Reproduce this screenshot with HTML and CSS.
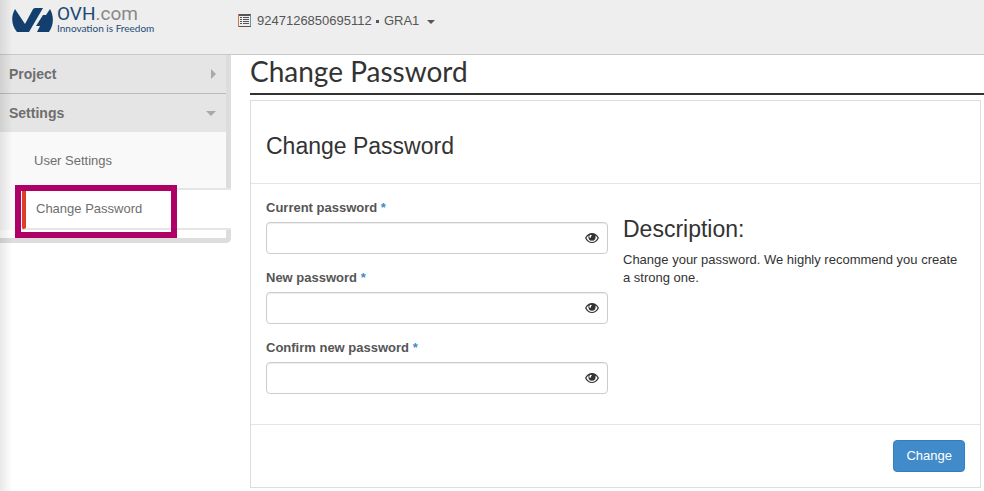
FILE: index.html
```html
<!DOCTYPE html>
<html lang="en">
<head>
<meta charset="utf-8">
<title>Change Password</title>
<link rel="stylesheet" href="styles.css">
</head>
<body>
<svg class="defs" width="0" height="0" aria-hidden="true">
  <symbol id="eye" viewBox="0 0 14 12">
    <path fill-rule="evenodd" d="M0 6C1.700 2.500 4.200 1 7 1s5.300 1.500 7 5c-1.700 3.200-4.200 5-7 5S1.700 9.200 0 6zm1.400 0C3 8.700 4.700 10 7 10s4-1.300 5.600-4c-.6-1.200-1.300-2-2.400-2.600.3.500.4 1.100.4 1.700a3.600 3.600 0 0 1-7.200 0c0-.6.100-1.200.4-1.700C2.700 4 2 4.800 1.400 6zm4-3.300c-.9.600-1.300 1.700-1 2.900l1.500.2c-.1-1.200.3-1.900 1.300-2.300z"/>
  </symbol>
</svg>
<header class="topbar">
  <a class="brand" href="#">
    <svg class="brand-mark" width="41" height="26" viewBox="0 0 41 26" aria-hidden="true">
      <path fill="#123f6d" d="M3 3l10 15 7-13q1-3 3-3h8L17 26H5C-1 19-1 10 3 3zM38 3c4 7 4 16-1 23H25l3-6h-4l7-11h3z"/>
    </svg>
    <span class="brand-text">
      <span class="brand-name">OVH<span class="brand-tld">.com</span></span>
      <span class="brand-tag">Innovation is Freedom</span>
    </span>
  </a>
  <button class="project-menu" type="button">
    <svg width="13" height="13" viewBox="0 0 13 13" aria-hidden="true">
      <path fill="#555" fill-rule="evenodd" d="M0 0h13v13H0zM1 2v10h11V2z"/>
      <path fill="#c8784a" d="M0 0h1v13H0z"/>
      <path fill="#6b93ad" d="M12 1h1v11h-1z"/>
      <path fill="#555" d="M2 3h2v1H2zM5 3h6v1H5zM2 5h2v1H2zM5 5h6v1H5zM2 7h2v1H2zM5 7h6v1H5zM2 9h2v1H2zM5 9h6v1H5z"/>
    </svg>
    <span>9247126850695112 <span class="dot"></span> GRA1</span>
    <span class="caret"></span>
  </button>
</header>
<div class="layout">
  <nav class="sidebar">
    <a class="group" href="#">Project<span class="arrow-right"></span></a>
    <a class="group" href="#">Settings<span class="arrow-down"></span></a>
    <div class="submenu">
      <a class="item" href="#">User Settings</a>
      <a class="item active" href="#">Change Password</a>
    </div>
  </nav>
  <main class="content">
    <h1>Change Password</h1>
    <form class="panel">
      <div class="panel-head"><h2>Change Password</h2></div>
      <div class="panel-body">
        <div class="fields">
          <div class="field">
            <label for="current">Current password <span class="required">*</span></label>
            <div class="control"><input id="current" type="password"><button class="reveal" type="button" aria-label="Show current password"><svg width="14" height="12"><use href="#eye"/></svg></button></div>
          </div>
          <div class="field">
            <label for="new">New password <span class="required">*</span></label>
            <div class="control"><input id="new" type="password"><button class="reveal" type="button" aria-label="Show new password"><svg width="14" height="12"><use href="#eye"/></svg></button></div>
          </div>
          <div class="field">
            <label for="confirm">Confirm new password <span class="required">*</span></label>
            <div class="control"><input id="confirm" type="password"><button class="reveal" type="button" aria-label="Show confirmed password"><svg width="14" height="12"><use href="#eye"/></svg></button></div>
          </div>
        </div>
        <div class="description">
          <h2>Description:</h2>
          <p>Change your password. We highly recommend you create a strong one.</p>
        </div>
      </div>
      <div class="panel-foot"><button class="submit" type="submit">Change</button></div>
    </form>
  </main>
</div>
</body>
</html>
```
FILE: styles.css
```css
* { box-sizing: border-box; }

body {
  margin: 0;
  min-height: 100vh;
  background: #fff;
  color: #333;
  font: 13px/18px "Liberation Sans", Arial, sans-serif;
}

/* Soft shade along the left edge of the window */
body::before {
  content: "";
  position: fixed;
  inset: 0 auto 0 0;
  z-index: 1;
  width: 12px;
  background: linear-gradient(to right, rgba(0, 0, 0, .09), transparent);
  pointer-events: none;
}

a { color: inherit; text-decoration: none; }
h1, h2, p { margin: 0; }
h2 { font-size: 23px; font-weight: 400; line-height: 26px; }
.defs { position: absolute; }

.topbar {
  display: flex;
  align-items: flex-start;
  height: 55px;
  border-bottom: 1px solid #c8c8c8;
  background: #eee;
}

.brand {
  display: flex;
  gap: 4px;
  width: 238px;
  padding: 4px 0 0 12px;
  font-family: Lato, sans-serif;
  color: #1c4a77;
}
.brand-mark { margin-top: 2px; }
.brand-text { display: flex; flex-direction: column; }
.brand-name { font: 400 19px/19px Roboto, sans-serif; }
.brand-tld { color: #888; }
.brand-tag { font-size: 10px; line-height: 10px; }

.project-menu {
  display: flex;
  align-items: center;
  gap: 6px;
  margin-top: 11px;
  padding: 0;
  border: 0;
  background: none;
  color: #555;
  font: inherit;
  line-height: 19px;
}
.dot {
  display: inline-block;
  width: 3px;
  height: 3px;
  margin: 0 1px 2px;
  background: #555;
}
.caret {
  margin: 3px 0 0 2px;
  border: 4px solid transparent;
  border-top-color: #555;
  border-bottom: 0;
}

.layout { display: flex; align-items: flex-start; }

.sidebar {
  flex: 0 0 231px;
  padding-bottom: 8px;
  border: solid #ddd;
  border-width: 0 5px 5px 0;
  border-bottom-right-radius: 5px;
}
.group {
  display: flex;
  align-items: center;
  justify-content: space-between;
  height: 38px;
  padding: 0 10px 0 9px;
  background: #e5e5e5;
  color: #6e6e6e;
  font-size: 14px;
  font-weight: 700;
}
.group + .group { height: 39px; border-top: 1px solid #b9bcbb; }
.arrow-right {
  border: 5px solid transparent;
  border-left-color: #a7a9ab;
  border-right: 0;
}
.arrow-down {
  border: 5px solid transparent;
  border-top-color: #a7a9ab;
  border-bottom: 0;
}
.submenu { background: #f9f9f9; }
.item {
  display: flex;
  align-items: center;
  height: 56px;
  padding: 2px 0 0 34px;
  color: #6e6e6e;
}
.item.active {
  position: relative;
  height: 42px;
  margin: 0 -5px 0 22px;
  padding: 0 0 0 10px;
  border: solid #e5e5e5;
  border-width: 2px 0;
  border-left: 4px solid #dd3f26;
  border-radius: 3px 0 0 3px;
  background: #fff;
}
.item.active::after {
  content: "";
  position: absolute;
  inset: -5px 54px -10px -11px;
  border: 6px solid #ae0067;
}

.content { flex: 1; min-width: 0; padding-left: 19px; }
h1 {
  padding: 0 0 5px;
  border-bottom: 2px solid #333;
  font: 400 28px/33px Lato, sans-serif;
}

.panel {
  margin: 5px 3px 3px 0;
  border: 1px solid #ddd;
}
.panel-head { padding: 32px 15px 24px; border-bottom: 1px solid #e5e5e5; }
.panel-body {
  display: grid;
  grid-template-columns: 1fr 1fr;
  gap: 15px;
  padding: 14px 15px 30px;
}
.fields { display: grid; gap: 14px; }
.field { display: grid; gap: 5px; }
label { color: #555; font-weight: 700; line-height: 19px; }
.required { color: #428bca; }
.control { position: relative; }
input {
  display: block;
  width: 100%;
  height: 32px;
  padding: 6px 30px 6px 12px;
  border: 1px solid #ccc;
  border-radius: 4px;
  box-shadow: inset 0 1px 1px rgba(0, 0, 0, .075);
  font: inherit;
}
.reveal {
  position: absolute;
  inset: 0 9px 0 auto;
  display: flex;
  align-items: center;
  padding: 0;
  border: 0;
  background: none;
  fill: #333;
}
.description { padding-top: 18px; }
.description p { margin-top: 9px; }

.panel-foot {
  display: flex;
  justify-content: flex-end;
  padding: 15px;
  border-top: 1px solid #e5e5e5;
}
.submit {
  height: 32px;
  padding: 0 12px;
  border: 1px solid #357ebd;
  border-radius: 4px;
  background: #428bca;
  color: #fff;
  font: inherit;
}
```
